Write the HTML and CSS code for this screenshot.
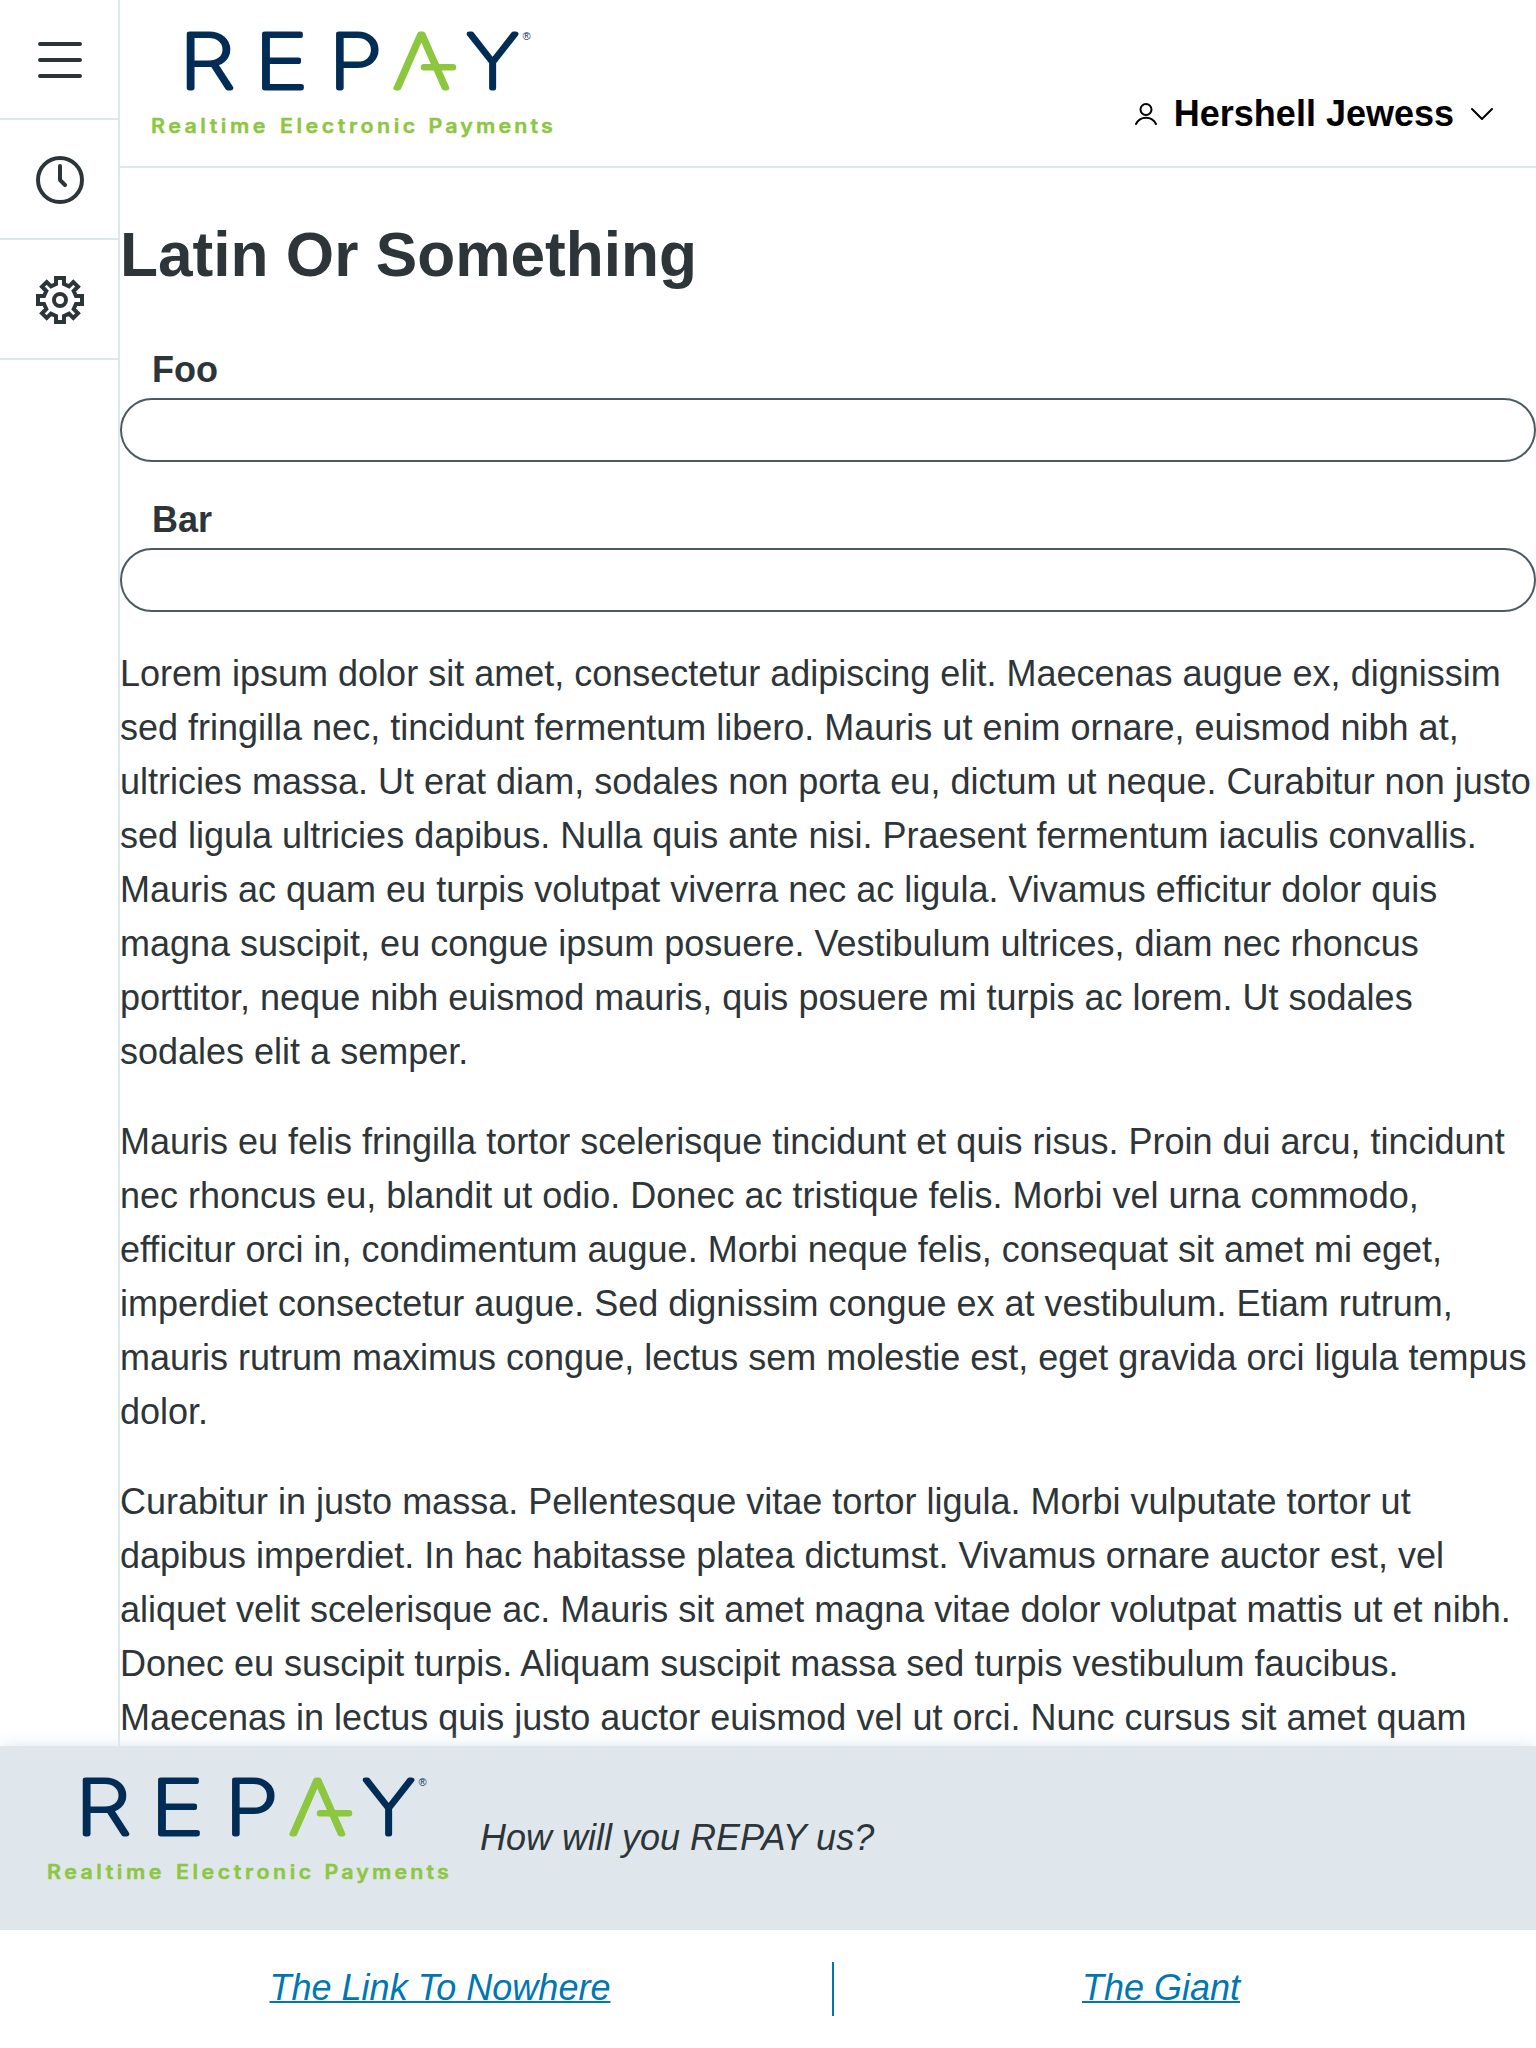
FILE: index.html
```html
<!DOCTYPE html>
<html lang="en">
<head>
<meta charset="utf-8">
<title>REPAY</title>
<link rel="stylesheet" href="styles.css">
</head>
<body>
<svg class="defs" aria-hidden="true">
  <symbol id="logo" viewBox="0 0 401 104" overflow="visible">
    <g class="logo-word">
      <text transform="translate(27.400 56.400) scale(1.210 1)">R</text>
      <text transform="translate(102.700 56.400) scale(1.220 1)">E</text>
      <text transform="translate(177 56.400) scale(1.180 1)">P</text>
      <text class="logo-accent" transform="translate(241.500 56.400) scale(1.180 1)">Λ</text>
      <text transform="translate(314.800 56.400) scale(1.090 1)">Y</text>
    </g>
    <line class="logo-bar" x1="272" y1="35.3" x2="301" y2="35.3"/>
    <text class="logo-reg" x="370.500" y="7.500">®</text>
    <g class="logo-tag">
      <text transform="translate(-1 100.700) scale(1.100 1)" textLength="104">Realtime</text>
      <text transform="translate(128 100.700) scale(1.100 1)" textLength="123">Electronic</text>
      <text transform="translate(276.500 100.700) scale(1.100 1)" textLength="113">Payments</text>
    </g>
  </symbol>
</svg>
<div class="app">
  <nav class="sidebar">
    <a class="side-item"><svg width="48" height="48" viewBox="0 0 48 48"><path d="M4 8h40M4 24h40M4 40h40"/></svg></a>
    <a class="side-item"><svg width="48" height="48" viewBox="0 0 48 48"><circle cx="24" cy="24" r="22"/><path d="M24 10v14l5 5"/></svg></a>
    <a class="side-item"><svg width="48" height="48" viewBox="-24 -24 48 48"><circle r="6"/><path class="gear" d="M-4-22H4V-16L9-13.700 13.300-18 18-13.300 13.700-9 16-4H22V4H16L13.700 9 18 13.300 13.300 18 9 13.700 4 16V22H-4V16L-9 13.700-13.300 18-18 13.300-13.700 9-16 4H-22V-4H-16L-13.700-9-18-13.300-13.300-18-9-13.700-4-16Z"/></svg></a>
  </nav>
  <div class="page">
    <header class="header">
      <svg class="logo"><use href="#logo"/></svg>
      <div class="user">
        <svg width="24" height="24" viewBox="0 0 24 24"><circle cx="12" cy="7.500" r="5.500"/><path d="M2 22c4-8.500 16-8.500 20 0"/></svg>
        <span>Hershell Jewess</span>
        <svg width="24" height="24" viewBox="0 0 24 24"><path d="M2 7l10 10 10-10"/></svg>
      </div>
    </header>
    <main class="content">
      <h1>Latin Or Something</h1>
      <label class="field"><span>Foo</span><input type="text"></label>
      <label class="field"><span>Bar</span><input type="text"></label>
      <p>Lorem ipsum dolor sit amet, consectetur adipiscing elit. Maecenas augue ex, dignissim sed fringilla nec, tincidunt fermentum libero. Mauris ut enim ornare, euismod nibh at, ultricies massa. Ut erat diam, sodales non porta eu, dictum ut neque. Curabitur non justo sed ligula ultricies dapibus. Nulla quis ante nisi. Praesent fermentum iaculis convallis. Mauris ac quam eu turpis volutpat viverra nec ac ligula. Vivamus efficitur dolor quis magna suscipit, eu congue ipsum posuere. Vestibulum ultrices, diam nec rhoncus porttitor, neque nibh euismod mauris, quis posuere mi turpis ac lorem. Ut sodales sodales elit a semper.</p>
      <p>Mauris eu felis fringilla tortor scelerisque tincidunt et quis risus. Proin dui arcu, tincidunt nec rhoncus eu, blandit ut odio. Donec ac tristique felis. Morbi vel urna commodo, efficitur orci in, condimentum augue. Morbi neque felis, consequat sit amet mi eget, imperdiet consectetur augue. Sed dignissim congue ex at vestibulum. Etiam rutrum, mauris rutrum maximus congue, lectus sem molestie est, eget gravida orci ligula tempus dolor.</p>
      <p>Curabitur in justo massa. Pellentesque vitae tortor ligula. Morbi vulputate tortor ut dapibus imperdiet. In hac habitasse platea dictumst. Vivamus ornare auctor est, vel aliquet velit scelerisque ac. Mauris sit amet magna vitae dolor volutpat mattis ut et nibh. Donec eu suscipit turpis. Aliquam suscipit massa sed turpis vestibulum faucibus. Maecenas in lectus quis justo auctor euismod vel ut orci. Nunc cursus sit amet quam</p>
    </main>
  </div>
</div>
<footer class="footer">
  <div class="banner">
    <svg class="logo"><use href="#logo"/></svg>
    <em>How will you REPAY us?</em>
  </div>
  <ul class="links">
    <li class="link-wide"><a href="#">The Link To Nowhere</a></li>
    <li><a href="#">The Giant</a></li>
  </ul>
</footer>
</body>
</html>
```
FILE: styles.css
```css
* { box-sizing: border-box; }
body {
  margin: 0;
  height: 2048px;
  display: flex;
  flex-direction: column;
  overflow: hidden;
  background: #fff;
  color: #2d3538;
  font: 36px/54px "Liberation Sans", Arial, sans-serif;
}
.defs { display: none; }
.app { flex: 1; min-height: 0; display: flex; overflow: hidden; }
.sidebar { flex: none; width: 120px; border-right: 2px solid #dde8eb; }
.side-item {
  display: flex;
  height: 120px;
  padding: 36px 0 0 36px;
  border-bottom: 2px solid #dde8eb;
}
.side-item svg {
  flex: none;
  fill: none;
  stroke: #2d3538;
  stroke-width: 4;
  stroke-linecap: round;
  stroke-linejoin: round;
}
.side-item .gear { stroke-linejoin: miter; }
.page { flex: 1; min-width: 0; }
.header {
  display: flex;
  justify-content: space-between;
  align-items: flex-start;
  height: 168px;
  padding: 32px 42px 0 32px;
  border-bottom: 2px solid #dde8eb;
}
.logo { flex: none; display: block; width: 401px; height: 104px; overflow: visible; }
.logo-word { font-family: Inter, sans-serif; font-weight: 100; font-size: 74px; fill: #002c55; stroke: #002c55; stroke-width: 4.8px; stroke-linejoin: round; }
.logo-accent { fill: #8dc63f; stroke: #8dc63f; }
.logo-bar { stroke: #8dc63f; stroke-width: 6.5px; stroke-linecap: round; }
.logo-reg { font: 11px "Liberation Sans", Arial, sans-serif; fill: #002c55; }
.logo-tag { font: 600 19.5px Inter, sans-serif; fill: #8dc63f; stroke: #8dc63f; stroke-width: .4px; stroke-linejoin: round; }
.user {
  display: flex;
  align-items: center;
  margin-top: 55px;
  color: #000;
  font-weight: bold;
}
.user span { margin: 0 16px; }
.user svg { fill: none; stroke: #000; stroke-width: 2; stroke-linecap: round; stroke-linejoin: round; }
h1 { margin: 0; padding: 39px 0 41px; font-size: 62.2px; line-height: 96px; }
.field { display: block; margin-bottom: 32px; }
.field span { display: block; padding: 0 0 2px 32px; line-height: 52px; font-weight: bold; }
.field input {
  display: block;
  width: 100%;
  height: 64px;
  padding: 0 32px;
  border: 2px solid #4c5a5f;
  border-radius: 32px;
  background: #fff;
  font: inherit;
}
p { margin: 36px 0; }
.field + p { margin-top: 35px; }
.footer { position: relative; flex: none; background: #fff; box-shadow: 0 0 16px #dfe7ed; }
.banner {
  display: flex;
  height: 184px;
  padding: 32px 48px;
  gap: 31px;
  background: #dfe7ed;
}
.banner em { align-self: center; }
.links { display: flex; margin: 0; padding: 32px 48px; list-style: none; }
.links li { flex: 0 0 654px; height: 54px; line-height: 52px; text-align: center; }
.links .link-wide { flex-basis: 786px; border-right: 2px solid #0077b0; }
.links a { color: #0077b0; font-style: italic; text-decoration: underline 2px; }
```
